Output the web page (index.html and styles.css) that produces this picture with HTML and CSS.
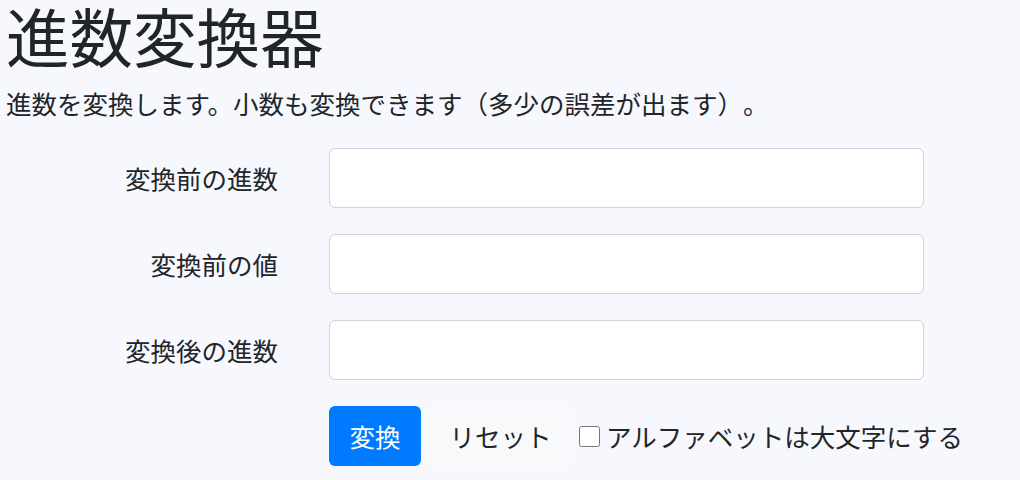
FILE: index.html
```html
<!DOCTYPE html>
<html lang="ja">
<head>
  <meta charset="UTF-8">
  <meta name="viewport" content="width=device-width, initial-scale=1.0">
  <title>進数変換器</title>
  <link rel="stylesheet" href="styles.css">
</head>
<body>
  <div class="container">
    <h1>進数変換器</h1>
    <p class="lead">進数を変換します。小数も変換できます（多少の誤差が出ます）。</p>
    <form id="convertForm">
      <div class="form-row">
        <label for="fromBase">変換前の進数</label>
        <input type="text" id="fromBase" class="form-control">
      </div>
      <div class="form-row">
        <label for="fromValue">変換前の値</label>
        <input type="text" id="fromValue" class="form-control">
      </div>
      <div class="form-row">
        <label for="toBase">変換後の進数</label>
        <input type="text" id="toBase" class="form-control">
      </div>
      <div class="form-row">
        <span class="spacer"></span>
        <div class="actions">
          <button type="submit" class="btn btn-primary">変換</button>
          <button type="reset" class="btn btn-light">リセット</button>
          <label class="check"><input type="checkbox" id="upper">アルファベットは大文字にする</label>
        </div>
      </div>
    </form>
  </div>
</body>
</html>
```

FILE: styles.css
```css
/* ページ全体 */
body {
  margin: 0;
  background-color: #f7f8fd;
  color: #212529;
  font-family: "Noto Sans CJK JP", "Noto Sans", sans-serif;
  font-size: 25.5px;
  line-height: 1.5;
  text-spacing-trim: space-all;
}

.container {
  padding: 0 6px;
}

h1 {
  margin: 0 0 14px;
  font-size: 63.5px;
  font-weight: 400;
  line-height: 1.1;
}

.lead {
  margin: 0 0 26px;
}

/* フォーム */
.form-row {
  display: flex;
  align-items: center;
  margin-bottom: 26px;
}

.form-row > label,
.spacer {
  width: 272px;
  margin-right: 51px;
  text-align: right;
}

.form-control {
  box-sizing: border-box;
  width: 595px;
  height: 60px;
  padding: 9px 19px;
  font: inherit;
  background-color: #fff;
  border: 1.5px solid #ced4da;
  border-radius: 6px;
}

.actions {
  display: flex;
  align-items: center;
}

.btn {
  height: 60px;
  padding: 0 20px;
  font: inherit;
  border: none;
  border-radius: 6px;
  cursor: pointer;
}

.btn-primary {
  width: 92px;
  background-color: #007bff;
  color: #fff;
}

.btn-light {
  width: 145px;
  margin-left: 7px;
  background-color: #f8f9fa;
  color: #212529;
}

.check {
  display: flex;
  align-items: center;
  margin-left: 6px;
}

.check input {
  width: 21px;
  height: 21px;
  margin: 0 6px 0 0;
}
```
